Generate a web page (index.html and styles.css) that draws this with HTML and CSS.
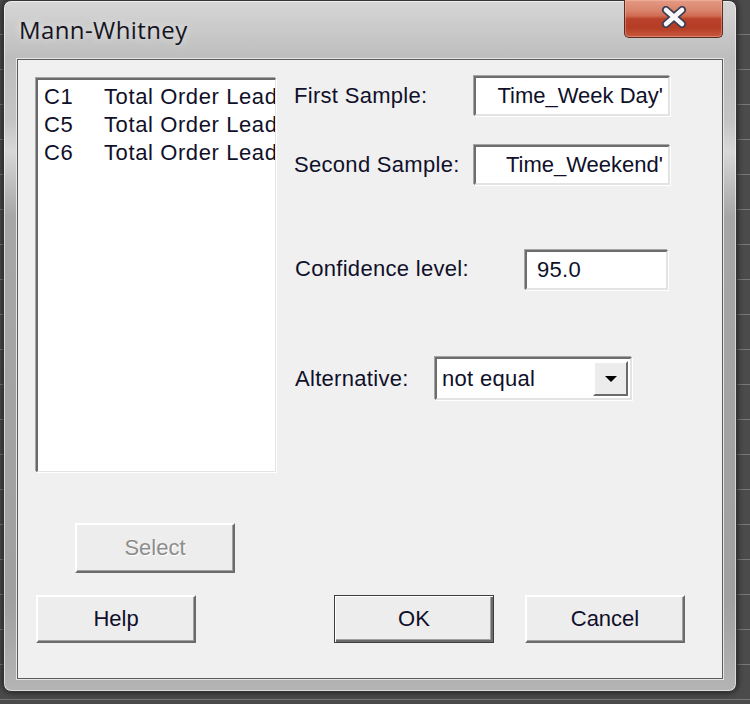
FILE: index.html
```html
<!DOCTYPE html>
<html lang="en">
<head>
  <meta charset="UTF-8">
  <meta name="viewport" content="width=device-width, initial-scale=1.0">
  <title>Mann-Whitney</title>
  <link rel="stylesheet" href="styles.css">
</head>
<body>
  <div class="window">
    <div class="titlebar">
      <span class="title">Mann-Whitney</span>
      <button class="close" aria-label="Close">
        <svg width="28" height="22" viewBox="0 0 28 22">
          <path d="M6 4 L22 18 M22 4 L6 18" stroke="#3b3f55" stroke-width="8" stroke-linecap="round"/>
          <path d="M6 4 L22 18 M22 4 L6 18" stroke="#fafafa" stroke-width="4.6" stroke-linecap="round"/>
        </svg>
      </button>
    </div>

    <div class="client">
      <div class="main">
        <div class="varlist">
          <div class="var"><span class="var-col">C1</span><span class="var-name">Total Order Lead</span></div>
          <div class="var"><span class="var-col">C5</span><span class="var-name">Total Order Lead</span></div>
          <div class="var"><span class="var-col">C6</span><span class="var-name">Total Order Lead</span></div>
        </div>

        <div class="fields">
          <div class="field field-first">
            <label>First Sample:</label>
            <div class="textbox textbox-right">Time_Week Day'</div>
          </div>
          <div class="field field-second">
            <label>Second Sample:</label>
            <div class="textbox textbox-right">Time_Weekend'</div>
          </div>
          <div class="field field-conf">
            <label>Confidence level:</label>
            <div class="textbox textbox-short">95.0</div>
          </div>
          <div class="field field-alt">
            <label>Alternative:</label>
            <div class="dropdown">
              <span class="dropdown-value">not equal</span>
              <span class="dropdown-arrow"><span class="tri"></span></span>
            </div>
          </div>
        </div>
      </div>

      <div class="select-row">
        <button class="btn btn-disabled">Select</button>
      </div>

      <div class="actions">
        <button class="btn btn-help">Help</button>
        <button class="btn btn-default">OK</button>
        <button class="btn btn-cancel">Cancel</button>
      </div>
    </div>
  </div>
</body>
</html>
```

FILE: styles.css
```css
body {
  margin: 0;
  width: 750px;
  height: 704px;
  overflow: hidden;
  font-family: "Liberation Sans", Arial, sans-serif;
  background: repeating-linear-gradient(to bottom, #4b4b4b 0, #4b4b4b 34px, #777 34px, #777 35px);
}
.window {
  box-sizing: border-box;
  width: 734px;
  height: 692px;
  margin-left: 3px;
  display: flex;
  flex-direction: column;
  border: 1px solid #353535;
  border-radius: 8px;
  background: linear-gradient(to bottom, #d6d6d6 0, #bdbdbd 58px, #c4c4c4 120px, #d8d8d8 150px, #a6a6a6 215px, #a0a0a0 600px, #b4b4b4 100%);
  box-shadow: inset 0 0 0 1px rgba(255, 255, 255, 0.55), 0 0 6px rgba(0, 0, 0, 0.7);
}
.titlebar {
  height: 58px;
  flex: none;
  display: flex;
  align-items: center;
  justify-content: space-between;
}
.title {
  padding-left: 15px;
  margin-top: -1px;
  font-family: "Open Sans", sans-serif;
  font-size: 24px;
  letter-spacing: 0.4px;
  color: #15151f;
  text-shadow: 0 0 8px rgba(255, 255, 255, 0.7);
}
.close {
  align-self: flex-start;
  margin-top: -1px;
  margin-right: 13px;
  width: 99px;
  height: 38px;
  padding: 0;
  display: flex;
  align-items: center;
  justify-content: center;
  border: 1px solid #5b2b24;
  border-top: none;
  border-radius: 0 0 5px 5px;
  background: linear-gradient(to bottom, #e49a84 0, #d9826a 11px, #cf6a50 16px, #b9412a 19px, #b53d26 28px, #c7593f 37px);
  box-shadow: inset 0 0 0 1px rgba(255, 210, 190, 0.35);
}
.close svg {
  margin-top: -3px;
}
.client {
  flex: 1;
  margin: 0 13px 12px 13px;
  padding: 16px 0 0 18px;
  border: 1px solid #5c5c5c;
  background: #f0f0f0;
  box-shadow: 0 0 0 1px #e6e6e6;
}
.main {
  display: flex;
  align-items: flex-start;
}
.varlist {
  box-sizing: border-box;
  width: 240px;
  height: 394px;
  margin-top: 2px;
  padding: 3px 0 0 6px;
  overflow: hidden;
  background: #fff;
  border: 2px solid;
  border-color: #6a6a6a #e3e3e3 #e3e3e3 #6a6a6a;
  border-width: 2px 1px 1px 2px;
  box-shadow: -1px -1px 0 #a5a5a5, 1px 1px 0 #fff;
}
.var {
  display: flex;
  height: 28px;
  align-items: center;
  white-space: nowrap;
  font-size: 22px;
  letter-spacing: 0.6px;
  color: #10102a;
}
.var-col {
  flex: none;
  width: 60px;
}
.var-name {
  flex: 1;
  min-width: 0;
  overflow: hidden;
  text-overflow: clip;
}
.fields {
  margin-left: 18px;
  display: flex;
  flex-direction: column;
}
.field {
  display: flex;
  align-items: center;
  height: 40px;
  font-size: 22px;
  letter-spacing: 0.3px;
  color: #10102a;
}
.field label {
  flex: none;
}
.field-first label { width: 180px; }
.field-second { margin-top: 29px; }
.field-second label { width: 180px; }
.field-conf { margin-top: 65px; }
.field-conf label { width: 231px; padding-left: 1px; box-sizing: border-box; margin-top: -3px; }
.field-alt { margin-top: 67px; height: 43px; }
.field-alt label { width: 141px; padding-left: 1px; box-sizing: border-box; }
.textbox {
  box-sizing: border-box;
  height: 40px;
  width: 196px;
  padding: 0 8px 0 10px;
  display: flex;
  align-items: center;
  white-space: nowrap;
  overflow: hidden;
  background: #fff;
  border: 2px solid;
  border-color: #6d6d6d #e3e3e3 #e3e3e3 #6d6d6d;
  box-shadow: -1px -1px 0 #a5a5a5, 1px 1px 0 #fff;
}
.textbox-right {
  justify-content: flex-end;
  padding-right: 5px;
  letter-spacing: 0;
}
.textbox-short {
  width: 143px;
}
.dropdown {
  box-sizing: border-box;
  width: 197px;
  height: 43px;
  display: flex;
  align-items: center;
  padding: 0 2px 0 5px;
  background: #fff;
  border: 2px solid;
  border-color: #6d6d6d #e3e3e3 #e3e3e3 #6d6d6d;
  box-shadow: -1px -1px 0 #a5a5a5, 1px 1px 0 #fff;
}
.dropdown-value {
  flex: 1;
}
.dropdown-arrow {
  box-sizing: border-box;
  width: 35px;
  height: 35px;
  display: flex;
  align-items: center;
  justify-content: center;
  background: #ececec;
  border: 2px solid;
  border-color: #fff #6b6b6b #6b6b6b #fff;
}
.tri {
  width: 0;
  height: 0;
  border-left: 6px solid transparent;
  border-right: 6px solid transparent;
  border-top: 6px solid #000;
}
.btn {
  box-sizing: border-box;
  width: 160px;
  height: 48px;
  padding: 0;
  font-family: "Liberation Sans", Arial, sans-serif;
  font-size: 22px;
  color: #10102a;
  background: #ededed;
  border: 2px solid;
  border-color: #fff #6b6b6b #6b6b6b #fff;
  box-shadow: inset -1px -1px 0 #a0a0a0;
}
.select-row {
  margin-top: 51px;
  padding-left: 39px;
}
.btn-disabled {
  height: 50px;
  color: #8d8d8d;
  text-shadow: 1px 1px 0 #fff;
}
.actions {
  margin-top: 22px;
  display: flex;
}
.btn-default {
  margin-left: 138px;
  border: 1px solid #3d3d3d;
  box-shadow: inset 1px 1px 0 #fff, inset -2px -2px 0 #6b6b6b, inset -3px -3px 0 #a0a0a0;
}
.btn-cancel {
  margin-left: 31px;
}
```
